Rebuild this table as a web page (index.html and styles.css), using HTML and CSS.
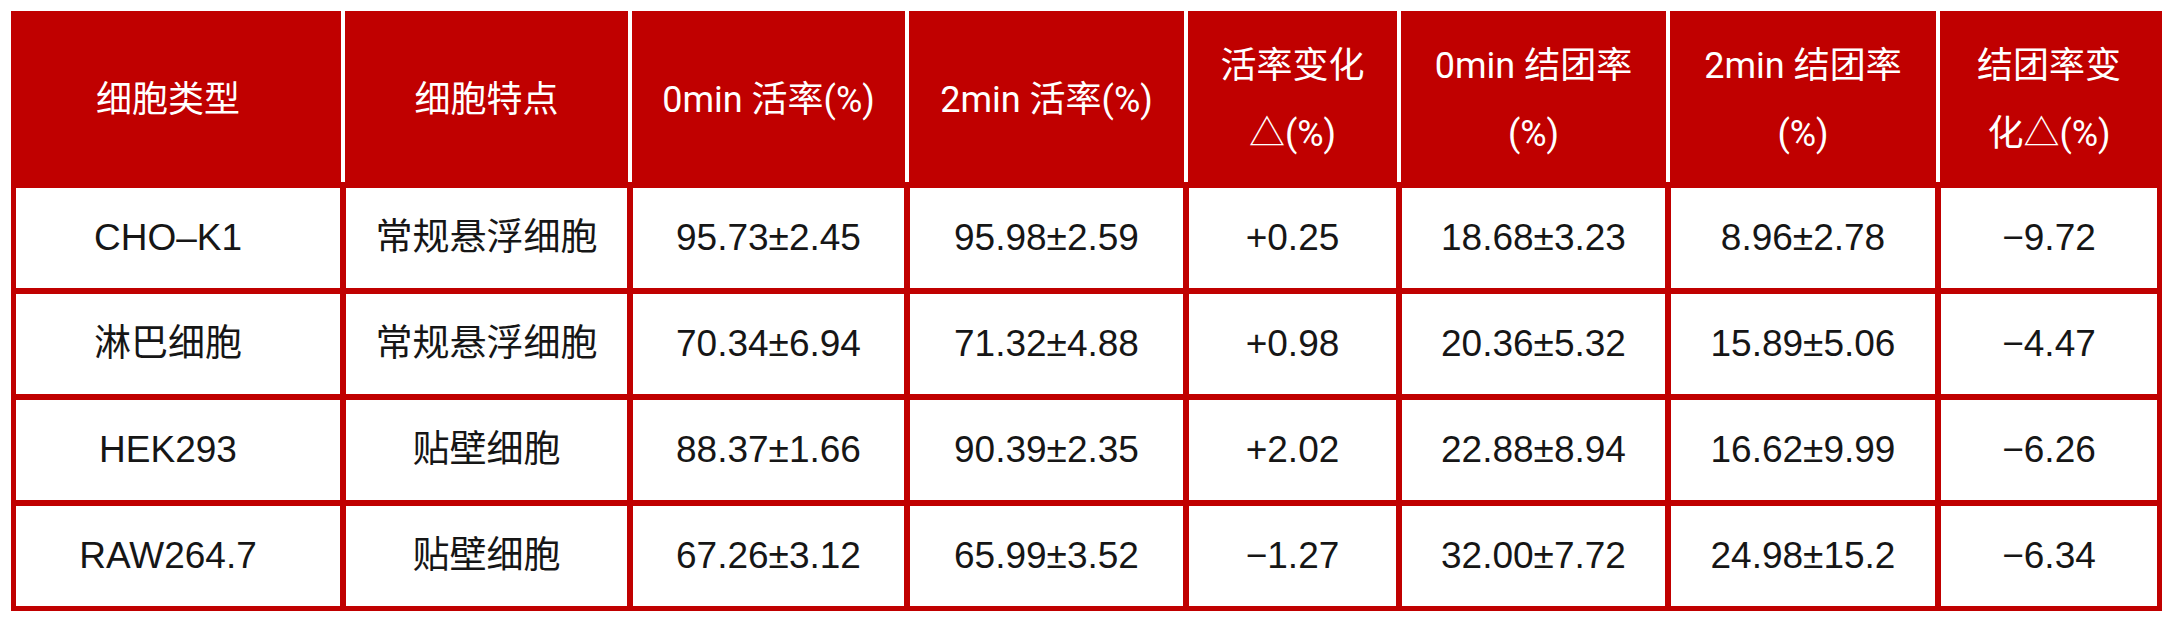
FILE: index.html
```html
<!DOCTYPE html>
<html lang="zh-CN">
<head>
<meta charset="utf-8">
<title>细胞活率与结团率</title>
<link rel="stylesheet" href="styles.css">
</head>
<body>
<div class="table">
  <div class="th first">细胞类型</div>
  <div class="th">细胞特点</div>
  <div class="th">0min 活率(%)</div>
  <div class="th">2min 活率(%)</div>
  <div class="th">活率变化<br>△(%)</div>
  <div class="th">0min 结团率<br>(%)</div>
  <div class="th">2min 结团率<br>(%)</div>
  <div class="th last">结团率变<br>化△(%)</div>

  <div class="td first">CHO–K1</div>
  <div class="td">常规悬浮细胞</div>
  <div class="td">95.73±2.45</div>
  <div class="td">95.98±2.59</div>
  <div class="td">+0.25</div>
  <div class="td">18.68±3.23</div>
  <div class="td">8.96±2.78</div>
  <div class="td">−9.72</div>

  <div class="td first">淋巴细胞</div>
  <div class="td">常规悬浮细胞</div>
  <div class="td">70.34±6.94</div>
  <div class="td">71.32±4.88</div>
  <div class="td">+0.98</div>
  <div class="td">20.36±5.32</div>
  <div class="td">15.89±5.06</div>
  <div class="td">−4.47</div>

  <div class="td first">HEK293</div>
  <div class="td">贴壁细胞</div>
  <div class="td">88.37±1.66</div>
  <div class="td">90.39±2.35</div>
  <div class="td">+2.02</div>
  <div class="td">22.88±8.94</div>
  <div class="td">16.62±9.99</div>
  <div class="td">−6.26</div>

  <div class="td first">RAW264.7</div>
  <div class="td">贴壁细胞</div>
  <div class="td">67.26±3.12</div>
  <div class="td">65.99±3.52</div>
  <div class="td">−1.27</div>
  <div class="td">32.00±7.72</div>
  <div class="td">24.98±15.2</div>
  <div class="td">−6.34</div>
</div>
</body>
</html>
```
FILE: styles.css
```css
html, body {
  margin: 0;
  padding: 0;
  background: #ffffff;
}

.table {
  display: grid;
  grid-template-columns: 324px 281px 271px 273px 207px 263px 264px 216px;
  grid-template-rows: 171px repeat(4, 100px);
  column-gap: 6px;
  row-gap: 6px;
  padding: 0 5px 5px 5px;
  margin: 11px 0 0 11px;
  width: max-content;
  background: #c00000;
}

.th {
  display: flex;
  align-items: center;
  justify-content: center;
  text-align: center;
  padding-top: 6px;
  box-sizing: border-box;
  background: #c00000;
  color: #ffffff;
  font-family: Roboto, "Noto Sans CJK SC", sans-serif;
  font-size: 36px;
  line-height: 68px;
  box-shadow: 1px 0 0 #c00000, 5px 0 0 #ffffff;
}

.th.last {
  box-shadow: none;
}

.td {
  display: flex;
  align-items: center;
  justify-content: center;
  text-align: center;
  box-sizing: border-box;
  background: #ffffff;
  color: #161616;
  font-family: "Liberation Sans", "Noto Sans CJK SC", sans-serif;
  font-size: 37px;
  line-height: 1.2;
}

.first {
  padding-right: 20px;
}
```
